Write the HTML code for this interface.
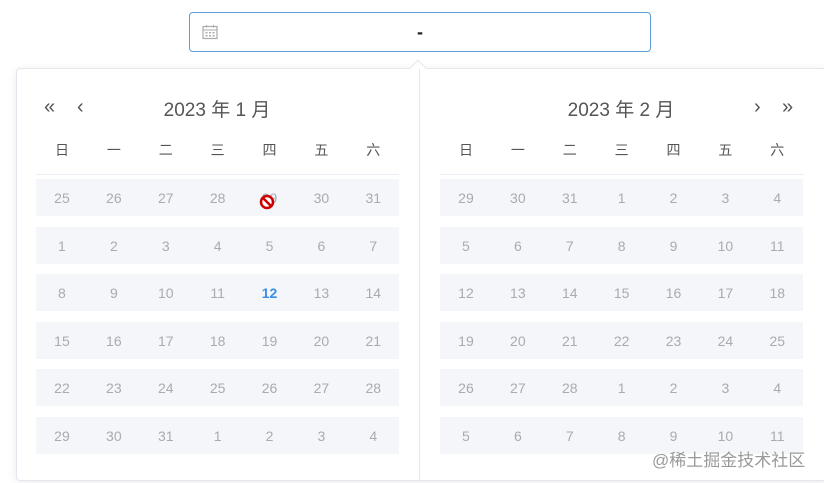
<!DOCTYPE html>
<html><head><meta charset="utf-8"><style>
*{margin:0;padding:0;box-sizing:border-box}
body{width:824px;height:483px;background:#fff;font-family:"Liberation Sans","Noto Sans CJK SC",sans-serif;position:relative;overflow:hidden}
.inp{position:absolute;left:189px;top:12px;width:462px;height:40px;border:1px solid #5a9fdb;border-radius:4px}
.inp .dash{position:absolute;left:227px;top:9px;font-size:18px;font-weight:bold;color:#222}
.panel{position:absolute;left:16px;top:68px;width:812px;height:413px;border:1px solid #e4e7ed;border-radius:4px;box-shadow:0 2px 10px rgba(0,0,0,.08);background:#fff}
.arrow{position:absolute;left:412px;top:62px;width:12px;height:12px;background:#fff;border-left:1px solid #e4e7ed;border-top:1px solid #e4e7ed;transform:rotate(45deg)}
.div{position:absolute;left:419px;top:69px;width:1px;height:411px;background:#e4e7ed}
.title{position:absolute;top:94px;font-size:19px;color:#555;width:200px;text-align:center}
.nav{position:absolute;top:96px;font-size:20px;color:#555}
.wk{position:absolute;top:140px;display:flex}
.wk span,.row span{width:51.9px;text-align:center;font-size:14px}
.wk span{color:#555}
.line{position:absolute;top:174px;height:1px;background:#ebeef5}
.row{position:absolute;display:flex;height:37px;background:#f4f6fa;align-items:center}
.row span{color:#a8abb2;font-size:14px}
.sel{color:#3a8ee6!important;font-weight:bold}
.wm{position:absolute;left:652px;top:446px;font-size:17px;color:#9a9a9a;text-shadow:0 0 2px #fff,0 0 2px #fff}
</style></head><body>
<div class="inp">
<svg style="position:absolute;left:12px;top:11px" width="16" height="16" viewBox="0 0 16 16"><rect x="1" y="2.5" width="14" height="12" fill="none" stroke="#aaa" stroke-width="1.2"/><line x1="1" y1="6" x2="15" y2="6" stroke="#aaa"/><line x1="4.5" y1="1" x2="4.5" y2="3.5" stroke="#aaa"/><line x1="11.5" y1="1" x2="11.5" y2="3.5" stroke="#aaa"/><g fill="#aaa"><rect x="3.5" y="8" width="2" height="1.5"/><rect x="7" y="8" width="2" height="1.5"/><rect x="10.5" y="8" width="2" height="1.5"/><rect x="3.5" y="11" width="2" height="1.5"/><rect x="7" y="11" width="2" height="1.5"/><rect x="10.5" y="11" width="2" height="1.5"/></g></svg>
<span class="dash">-</span></div>
<div class="panel"></div>
<div class="arrow"></div>
<div class="div"></div>
<span class="nav" style="left:44px">«</span><span class="nav" style="left:77px">‹</span>
<span class="title" style="left:117px;top:95px">2023 年 1 月</span>
<span class="title" style="left:521px;top:95px">2023 年 2 月</span>
<span class="nav" style="left:754px">›</span><span class="nav" style="left:782px">»</span>
<div class="wk" style="left:36px"><span>日</span><span>一</span><span>二</span><span>三</span><span>四</span><span>五</span><span>六</span></div>
<div class="wk" style="left:440px"><span>日</span><span>一</span><span>二</span><span>三</span><span>四</span><span>五</span><span>六</span></div>
<div class="line" style="left:36px;width:363px"></div>
<div class="line" style="left:440px;width:364px"></div>

<div class="row" style="left:36px;top:179px"><span>25</span><span>26</span><span>27</span><span>28</span><span>29</span><span>30</span><span>31</span></div>
<div class="row" style="left:36px;top:227px"><span>1</span><span>2</span><span>3</span><span>4</span><span>5</span><span>6</span><span>7</span></div>
<div class="row" style="left:36px;top:274px"><span>8</span><span>9</span><span>10</span><span>11</span><span class="sel">12</span><span>13</span><span>14</span></div>
<div class="row" style="left:36px;top:322px"><span>15</span><span>16</span><span>17</span><span>18</span><span>19</span><span>20</span><span>21</span></div>
<div class="row" style="left:36px;top:369px"><span>22</span><span>23</span><span>24</span><span>25</span><span>26</span><span>27</span><span>28</span></div>
<div class="row" style="left:36px;top:417px"><span>29</span><span>30</span><span>31</span><span>1</span><span>2</span><span>3</span><span>4</span></div>

<div class="row" style="left:440px;top:179px"><span>29</span><span>30</span><span>31</span><span>1</span><span>2</span><span>3</span><span>4</span></div>
<div class="row" style="left:440px;top:227px"><span>5</span><span>6</span><span>7</span><span>8</span><span>9</span><span>10</span><span>11</span></div>
<div class="row" style="left:440px;top:274px"><span>12</span><span>13</span><span>14</span><span>15</span><span>16</span><span>17</span><span>18</span></div>
<div class="row" style="left:440px;top:322px"><span>19</span><span>20</span><span>21</span><span>22</span><span>23</span><span>24</span><span>25</span></div>
<div class="row" style="left:440px;top:369px"><span>26</span><span>27</span><span>28</span><span>1</span><span>2</span><span>3</span><span>4</span></div>
<div class="row" style="left:440px;top:417px"><span>5</span><span>6</span><span>7</span><span>8</span><span>9</span><span>10</span><span>11</span></div>

<svg style="position:absolute;left:259px;top:194px" width="16" height="16" viewBox="0 0 16 16"><circle cx="8" cy="8" r="6" fill="#fff" stroke="#c00" stroke-width="2.5"/><line x1="4" y1="4" x2="12" y2="12" stroke="#c00" stroke-width="2.5"/></svg>
<div class="wm">@稀土掘金技术社区</div>
</body></html>
